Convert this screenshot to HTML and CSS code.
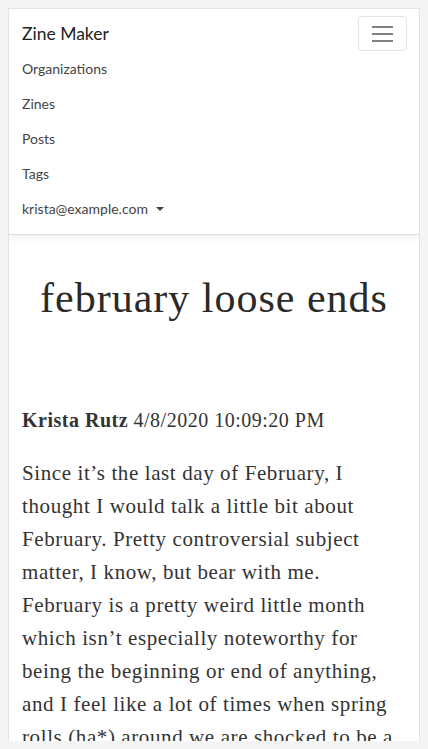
FILE: index.html
```html
<!DOCTYPE html>
<html>
<head>
<meta charset="utf-8">
<link rel="stylesheet" href="styles.css">
</head>
<body>
<div class="page">
  <nav class="navbar">
    <div class="nav-top">
      <a class="brand">Zine Maker</a>
      <button class="toggler"><span class="bar"></span><span class="bar"></span><span class="bar"></span></button>
    </div>
    <ul class="nav-links">
      <li><a>Organizations</a></li>
      <li><a>Zines</a></li>
      <li><a>Posts</a></li>
      <li><a>Tags</a></li>
      <li><a>krista@example.com <span class="caret"></span></a></li>
    </ul>
  </nav>
  <main class="content">
    <h1 class="title">february loose ends</h1>
    <p class="meta"><b>Krista Rutz</b> 4/8/2020 10:09:20 PM</p>
    <p class="body-text">Since it’s the last day of February, I thought I would talk a little bit about February. Pretty controversial subject matter, I know, but bear with me. February is a pretty weird little month which isn’t especially noteworthy for being the beginning or end of anything, and I feel like a lot of times when spring rolls (ha*) around we are shocked to be a month further along than we thought.</p>
  </main>
</div>
</body>
</html>
```
FILE: styles.css
```css
html, body { margin: 0; padding: 0; }
body {
  margin: 8px;
  background: #f4f4f4;
  font-family: Lato, "Liberation Sans", sans-serif;
  color: #333;
  overflow: hidden;
  height: 733px;
}
.page {
  background: #fff;
  border: 1px solid #e3e3e3;
  height: 735px;
  overflow: hidden;
}
.navbar {
  padding: 7px 12px 8px 13px;
  border-bottom: 1px solid #dcdcdc;
  box-shadow: 0 3px 8px rgba(0,0,0,0.06);
  position: relative;
}
.nav-top {
  display: flex;
  justify-content: space-between;
  align-items: center;
}
.brand {
  font-size: 17.5px;
  color: #222;
  line-height: 35px;
}
.toggler {
  width: 49px;
  height: 35px;
  background: #fff;
  border: 1px solid #e3e3e3;
  border-radius: 4px;
  display: flex;
  flex-direction: column;
  justify-content: center;
  align-items: center;
  gap: 5px;
  padding: 0;
}
.bar {
  display: block;
  width: 21px;
  height: 2px;
  background: #808080;
}
.nav-links {
  list-style: none;
  margin: 0;
  padding: 0;
}
.nav-links li {
  font-size: 14px;
  line-height: 35px;
  color: #444;
}
.caret {
  display: inline-block;
  width: 0; height: 0;
  border-left: 4px solid transparent;
  border-right: 4px solid transparent;
  border-top: 4px solid #444;
  vertical-align: 3px;
  margin-left: 4px;
}
.content {
  padding: 0 13px;
  font-family: "Liberation Serif", serif;
  color: #333;
}
.title {
  font-weight: normal;
  font-size: 42px;
  letter-spacing: 1px;
  text-align: center;
  margin: 39px 0 0;
  line-height: 48px;
  color: #2a2a2a;
}
.meta {
  font-size: 20px;
  letter-spacing: 0.5px;
  margin: 83px 0 0;
  line-height: 30px;
}
.body-text {
  font-size: 21px;
  letter-spacing: 0.6px;
  line-height: 33px;
  margin: 22px 0 0;
}
```
